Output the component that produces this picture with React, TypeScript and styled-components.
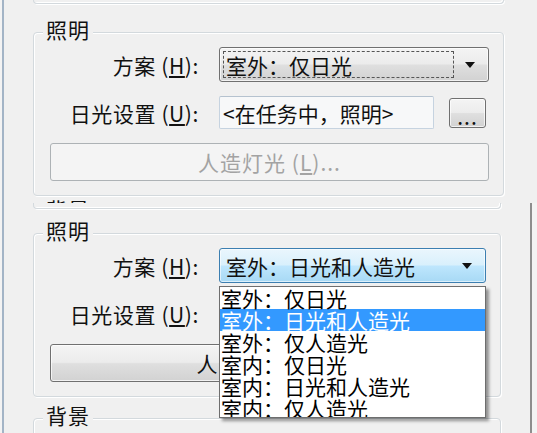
import React from "react";
import styled, { createGlobalStyle, css } from "styled-components";

const GlobalStyle = createGlobalStyle`
  html, body {
    margin: 0;
    padding: 0;
  }
  body {
    width: 537px;
    height: 433px;
    overflow: hidden;
    background: #f3f3f3;
    font-family: "Noto Sans CJK SC", "Noto Sans", sans-serif;
    color: #111;
  }
`;

const Page = styled.div`
  display: flex;
  flex-direction: column;
  width: 537px;
  height: 433px;
`;

// each half is a separate capture of the same dialog
const Shot = styled.section<{ $height: number; $edge?: boolean }>`
  position: relative;
  box-sizing: border-box;
  height: ${(p) => p.$height}px;
  margin-left: 2px;
  border-left: 2px solid #a3b4c6;
  padding-left: 29px;
  display: flex;
  flex-direction: column;
  overflow: hidden;
  background: #f0f0f0;
  ${(p) =>
    p.$edge
      ? css`
          width: 530px;
          border-right: 2px solid #8d8d8d;
          padding-right: 29px;
        `
      : css`
          width: 535px;
          padding-right: 33px;
        `}
`;

const PrevEnd = styled.div<{ $h: number }>`
  flex: none;
  height: ${(p) => p.$h}px;
  border: 1px solid #d3d9dd;
  border-top: none;
  border-radius: 0 0 4px 4px;
  box-shadow: inset -1px -1px 0 #fff, 1px 1px 0 #fff;
`;

const Group = styled.div<{ $top: number }>`
  position: relative;
  flex: none;
  margin-top: ${(p) => p.$top}px;
  border: 1px solid #d3d9dd;
  border-radius: 4px;
  box-shadow: inset 1px 1px 0 #fff, 1px 1px 0 #fff;
  padding: 14px 14px 14px 16px;
  display: grid;
  grid-template-columns: 155px 1fr;
  column-gap: 14px;
  row-gap: 14px;
  align-items: center;
`;

const Legend = styled.span`
  position: absolute;
  top: -16px;
  left: 9px;
  padding: 0 3px;
  background: #f0f0f0;
  font-size: 21px;
  line-height: 24px;
  letter-spacing: 1px;
  z-index: 1;
`;

const Label = styled.span`
  justify-self: end;
  padding-right: 6px;
  font-size: 21px;
  line-height: 24px;
  letter-spacing: 0.6px;
  white-space: nowrap;
`;

const ComboWrap = styled.div`
  position: relative;
`;

const Combo = styled.div<{ $open?: boolean }>`
  box-sizing: border-box;
  height: 35px;
  border-radius: 3px;
  display: flex;
  align-items: stretch;
  padding: 3px;
  font-size: 21px;
  ${(p) =>
    p.$open
      ? css`
          border: 1px solid #3c7fb1;
          background: linear-gradient(#eaf6fd 0%, #d9f0fc 48%, #bee6fd 52%, #a7d9f5 100%);
          box-shadow: inset 0 0 0 1px rgba(255, 255, 255, 0.6);
        `
      : css`
          border: 1px solid #707070;
          background: linear-gradient(#f4f4f4 0%, #ececec 48%, #dfdfdf 52%, #d2d2d2 100%);
          box-shadow: inset 0 0 0 1px rgba(255, 255, 255, 0.7);
        `}
`;

const ComboText = styled.div<{ $focus?: boolean }>`
  flex: 1;
  box-sizing: border-box;
  display: flex;
  align-items: center;
  padding-left: 2px;
  line-height: 24px;
  white-space: nowrap;
  border: 1px dashed ${(p) => (p.$focus ? "#555" : "transparent")};
`;

const Arrow = styled.span`
  flex: none;
  width: 31px;
  display: flex;
  align-items: center;
  justify-content: center;
  &::after {
    content: "";
    border-left: 5px solid transparent;
    border-right: 5px solid transparent;
    border-top: 6px solid #111;
  }
`;

const DropList = styled.ul`
  position: absolute;
  top: calc(100% + 3px);
  left: 0;
  right: 0;
  height: 132px;
  margin: 0;
  padding: 0;
  list-style: none;
  box-sizing: border-box;
  background: #fff;
  border: 1px solid #6e6e6e;
  box-shadow: 3px 3px 3px rgba(0, 0, 0, 0.4);
  overflow: hidden;
  z-index: 5;
`;

const Item = styled.li<{ $sel?: boolean }>`
  height: 22px;
  line-height: 22px;
  padding-left: 1px;
  font-size: 21px;
  white-space: nowrap;
  color: ${(p) => (p.$sel ? "#fff" : "#000")};
  background: ${(p) => (p.$sel ? "#3399ff" : "transparent")};
`;

const FieldRow = styled.div`
  display: flex;
  align-items: center;
  gap: 15px;
`;

const TextBox = styled.div`
  box-sizing: border-box;
  width: 215px;
  height: 33px;
  border: 1px solid #c6d3e0;
  border-top-color: #b5c2cf;
  border-radius: 2px;
  background: #f7f8f9;
  padding: 0 3px;
  display: flex;
  align-items: center;
  font-size: 21px;
  line-height: 24px;
  white-space: nowrap;
  overflow: hidden;
`;

const Button = styled.div<{ $disabled?: boolean; $wide?: boolean }>`
  box-sizing: border-box;
  border-radius: 3px;
  display: flex;
  align-items: center;
  justify-content: center;
  font-size: 21px;
  line-height: 24px;
  white-space: nowrap;
  letter-spacing: 1px;
  ${(p) =>
    p.$wide
      ? css`
          grid-column: 1 / -1;
          height: 38px;
        `
      : css`
          width: 37px;
          height: 30px;
          padding-top: 6px;
        `}
  ${(p) =>
    p.$disabled
      ? css`
          border: 1px solid #adb2b5;
          background: #f4f4f4;
          color: #a3a3a3;
        `
      : css`
          border: 1px solid #707070;
          background: linear-gradient(#f4f4f4 0%, #ececec 48%, #dfdfdf 52%, #d2d2d2 100%);
          box-shadow: inset 0 0 0 1px rgba(255, 255, 255, 0.7);
          color: #111;
        `}
`;

const BackgroundBox = styled(Group)`
  min-height: 40px;
`;

const schemes = [
  "室外：仅日光",
  "室外：日光和人造光",
  "室外：仅人造光",
  "室内：仅日光",
  "室内：日光和人造光",
  "室内：仅人造光",
];

function LightingGroup(props: { top: number; value: string; open?: boolean }) {
  return (
    <Group $top={props.top}>
      <Legend>照明</Legend>
      <Label>
        方案 (<u>H</u>):
      </Label>
      <ComboWrap>
        <Combo $open={props.open}>
          <ComboText $focus={!props.open}>{props.value}</ComboText>
          <Arrow />
        </Combo>
        {props.open && (
          <DropList>
            {schemes.map((s) => (
              <Item key={s} $sel={s === props.value}>
                {s}
              </Item>
            ))}
          </DropList>
        )}
      </ComboWrap>
      <Label>
        日光设置 (<u>U</u>):
      </Label>
      <FieldRow>
        <TextBox>&lt;在任务中，照明&gt;</TextBox>
        <Button>...</Button>
      </FieldRow>
      <Button $wide $disabled={!props.open}>
        人造灯光 (<u>L</u>)...
      </Button>
    </Group>
  );
}

export default function App() {
  return (
    <Page>
      <GlobalStyle />
      <Shot $height={203}>
        <PrevEnd $h={3} />
        <LightingGroup top={28} value="室外：仅日光" />
        <BackgroundBox $top={16}>
          <Legend>背景</Legend>
        </BackgroundBox>
      </Shot>
      <Shot $height={230} $edge>
        <PrevEnd $h={5} />
        <LightingGroup top={24} value="室外：日光和人造光" open />
        <BackgroundBox $top={21}>
          <Legend>背景</Legend>
        </BackgroundBox>
      </Shot>
    </Page>
  );
}
